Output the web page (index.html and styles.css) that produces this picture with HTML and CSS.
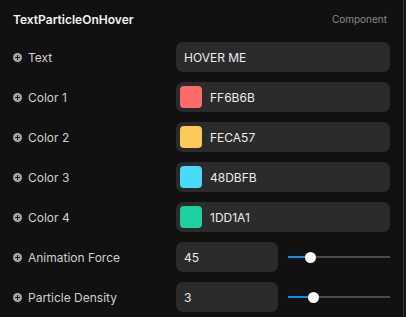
FILE: index.html
```html
<!DOCTYPE html>
<html>
<head>
<meta charset="utf-8">
<link rel="stylesheet" href="styles.css">
</head>
<body>
<div class="panel">
  <div class="header">
    <span class="title">TextParticleOnHover</span>
    <span class="kind">Component</span>
  </div>
  <div class="rows">
    <div class="row">
      <div class="label"><span class="plus"></span>Text</div>
      <div class="field"><span class="val">HOVER ME</span></div>
    </div>
    <div class="row">
      <div class="label"><span class="plus"></span>Color 1</div>
      <div class="field"><span class="swatch" style="background:#FF6B6B"></span><span class="val">FF6B6B</span></div>
    </div>
    <div class="row">
      <div class="label"><span class="plus"></span>Color 2</div>
      <div class="field"><span class="swatch" style="background:#FECA57"></span><span class="val">FECA57</span></div>
    </div>
    <div class="row">
      <div class="label"><span class="plus"></span>Color 3</div>
      <div class="field"><span class="swatch" style="background:#48DBFB"></span><span class="val">48DBFB</span></div>
    </div>
    <div class="row">
      <div class="label"><span class="plus"></span>Color 4</div>
      <div class="field"><span class="swatch" style="background:#1DD1A1"></span><span class="val">1DD1A1</span></div>
    </div>
    <div class="row">
      <div class="label"><span class="plus"></span>Animation Force</div>
      <div class="numrow">
        <div class="field num"><span class="val">45</span></div>
        <div class="slider"><div class="fill" style="width:22%"></div><div class="thumb"></div><div class="rest"></div></div>
      </div>
    </div>
    <div class="row">
      <div class="label"><span class="plus"></span>Particle Density</div>
      <div class="numrow">
        <div class="field num"><span class="val">3</span></div>
        <div class="slider"><div class="fill" style="width:24.5%"></div><div class="thumb"></div><div class="rest"></div></div>
      </div>
    </div>
  </div>
</div>
</body>
</html>
```
FILE: styles.css
```css
html, body {
  margin: 0;
  padding: 0;
  background: #111111;
  width: 406px;
  height: 317px;
  overflow: hidden;
}
body {
  font-family: Inter, "Noto Sans", sans-serif;
  color: #e6e6e6;
}
.panel {
  width: 404px;
  height: 317px;
  box-sizing: border-box;
  border-right: 1px solid #3a3a3a;
  padding: 10px 15px 0 13px;
  position: relative;
}
.header {
  display: flex;
  justify-content: space-between;
  align-items: center;
  height: 18px;
  margin-bottom: 14px;
}
.title {
  font-size: 12px;
  font-weight: 600;
  color: #f2f2f2;
}
.kind {
  font-size: 10px;
  color: #8a8a8a;
  margin-right: 1px;
}
.rows {
  display: flex;
  flex-direction: column;
  gap: 10px;
}
.row {
  display: grid;
  grid-template-columns: 163px 214px;
  height: 30px;
  align-items: center;
}
.label {
  display: flex;
  align-items: center;
  font-size: 12px;
  color: #cfcfcf;
}
.plus {
  width: 9px;
  height: 9px;
  border-radius: 50%;
  background: #a8a8a8;
  margin-right: 6px;
  position: relative;
  flex: none;
}
.plus::before, .plus::after {
  content: "";
  position: absolute;
  background: #111;
}
.plus::before {
  left: 2px; top: 4px; width: 5px; height: 1px;
}
.plus::after {
  left: 4px; top: 2px; width: 1px; height: 5px;
}
.field {
  height: 30px;
  background: #2b2b2b;
  border-radius: 7px;
  display: flex;
  align-items: center;
  padding: 0 4px;
  box-sizing: border-box;
}
.val {
  font-size: 12px;
  color: #ececec;
  margin-left: 4px;
}
.swatch {
  width: 22px;
  height: 22px;
  border-radius: 4px;
  flex: none;
  margin-right: 4px;
}
.numrow {
  display: flex;
  align-items: center;
  gap: 10px;
}
.num {
  width: 102px;
}
.slider {
  flex: 1;
  display: flex;
  align-items: center;
  height: 12px;
}
.fill {
  height: 2px;
  background: #0a8ff0;
  flex: none;
}
.thumb {
  width: 11px;
  height: 11px;
  border-radius: 50%;
  background: #ffffff;
  flex: none;
  margin: 0 -5px;
  position: relative;
  z-index: 1;
}
.rest {
  flex: 1;
  height: 2px;
  background: #4a4a4a;
}
```
